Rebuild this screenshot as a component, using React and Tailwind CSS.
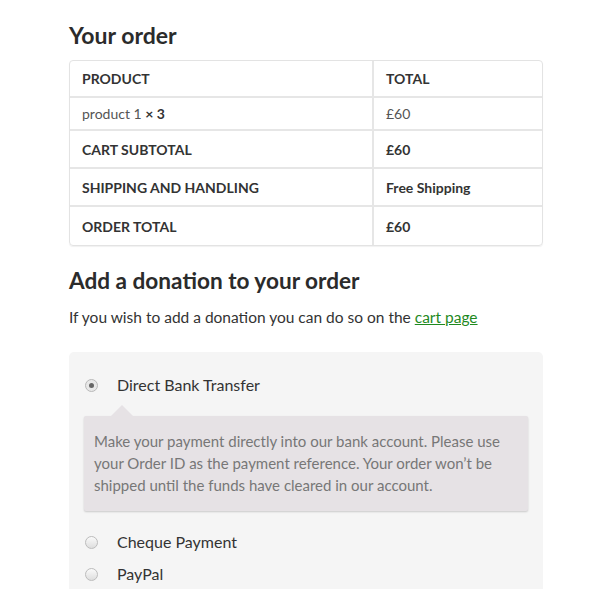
export default function App() {
  const rows = [
    { a: "CART SUBTOTAL", b: "£60" },
    { a: "SHIPPING AND HANDLING", b: "Free Shipping" },
    { a: "ORDER TOTAL", b: "£60" },
  ];
  return (
    <div className="min-h-[589px] bg-white font-['Lato',sans-serif] text-[#333]">
      <div className="ml-[69px] w-[474px] pt-[21px]">
        <h3 className="text-[23px] font-bold leading-[28px] text-[#2b2b2b]">Your order</h3>
        <div className="mt-[11px] overflow-hidden rounded-[4px] border border-[#e3e3e3] shadow-[0_1px_1px_rgba(0,0,0,0.06)] text-[14px]">
          <div className="flex h-[37px] items-center border-b-2 border-[#e6e6e6] font-bold text-[#333]">
            <div className="w-[304px] self-stretch flex items-center border-r-2 border-[#e6e6e6] pl-[12px]">PRODUCT</div>
            <div className="pl-[12px]">TOTAL</div>
          </div>
          <div className="flex h-[33px] items-center border-b-2 border-[#e6e6e6] text-[#555]">
            <div className="w-[304px] self-stretch flex items-center border-r-2 border-[#e6e6e6] pl-[12px]">
              product 1&nbsp;<strong className="text-[#333]">× 3</strong>
            </div>
            <div className="pl-[12px]">£60</div>
          </div>
          {rows.map((r, i) => (
            <div
              key={r.a}
              className={`flex h-[38px] items-center font-bold text-[#333] ${i < rows.length - 1 ? "border-b-2 border-[#e6e6e6]" : ""}`}
            >
              <div className="w-[304px] self-stretch flex items-center border-r-2 border-[#e6e6e6] pl-[12px]">{r.a}</div>
              <div className="pl-[12px]">{r.b}</div>
            </div>
          ))}
        </div>

        <h3 className="mt-[21px] text-[22.6px] font-bold leading-[28px] text-[#2b2b2b]">Add a donation to your order</h3>
        <p className="mt-[11px] text-[15.5px] leading-[22px] text-[#333]">
          If you wish to add a donation you can do so on the{" "}
          <a href="#" className="text-[#1f8a1f] underline">cart page</a>
        </p>

        <div className="mt-[24px] rounded-t-[5px] bg-[#f5f5f5] px-[15px] pt-[22px] pb-[6px]">
          <label className="flex items-center text-[16px] text-[#333]">
            <span className="ml-[1px] flex h-[13px] w-[13px] items-center justify-center rounded-full border border-[#b9b9b9] bg-[#e8e8e8]">
              <span className="h-[5px] w-[5px] rounded-full bg-[#666]" />
            </span>
            <span className="ml-[19px] leading-[22px]">Direct Bank Transfer</span>
          </label>
          <div className="relative mt-[20px] rounded-[2px] bg-[#e6e2e5] px-[10px] pt-[14px] pb-[15px] text-[15px] leading-[22px] text-[#777] shadow-[0_1px_2px_rgba(0,0,0,0.18)]">
            <div className="absolute left-[27px] top-[-11px] h-0 w-0 border-x-[11px] border-b-[11px] border-x-transparent border-b-[#e6e2e5]" />
            Make your payment directly into our bank account. Please use your Order ID as the payment reference. Your order won’t be shipped until the funds have cleared in our account.
          </div>
          <label className="mt-[20px] flex items-center text-[16px] text-[#333]">
            <span className="ml-[1px] h-[13px] w-[13px] rounded-full border border-[#bcbcbc] bg-gradient-to-b from-[#fafafa] to-[#dedede]" />
            <span className="ml-[19px] leading-[22px]">Cheque Payment</span>
          </label>
          <label className="mt-[10px] flex items-center text-[16px] text-[#333]">
            <span className="ml-[1px] h-[13px] w-[13px] rounded-full border border-[#bcbcbc] bg-gradient-to-b from-[#fafafa] to-[#dedede]" />
            <span className="ml-[19px] leading-[22px]">PayPal</span>
          </label>
        </div>
      </div>
    </div>
  );
}
